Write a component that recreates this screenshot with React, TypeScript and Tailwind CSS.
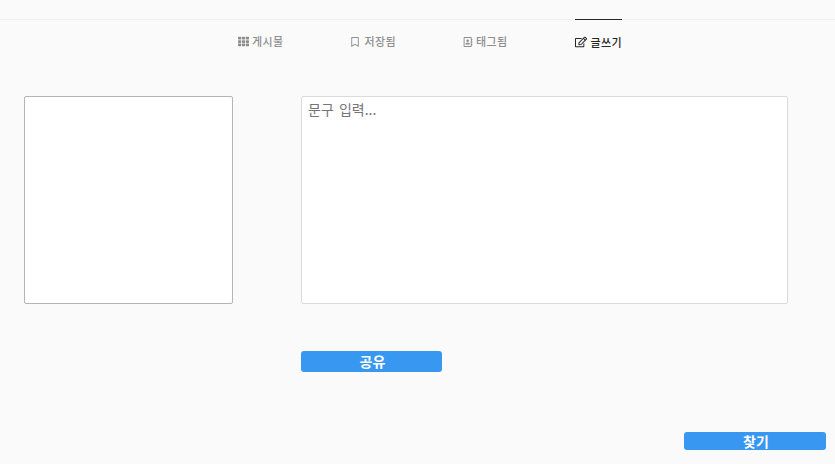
import React from 'react';
import { FaTh, FaRegBookmark, FaRegEdit, FaRegAddressBook } from 'react-icons/fa';

const font = "font-['Noto_Sans_CJK_KR','Noto_Sans',sans-serif]";

const App: React.FC = () => {
  return (
    <div className={`h-[464px] w-[835px] overflow-hidden bg-[#fafafa] ${font}`}>
      {/* Tabs */}
      <div className="h-5 border-b border-[#efefef]" />
      <nav className="flex justify-center gap-[67px] pl-[25px] -mt-px">
        <a className="flex h-[45px] items-center gap-[4px] text-[11px] font-medium tracking-[0.4px] text-[#8e8e8e]">
          <FaTh size={11} />
          <span className="-ml-px">게시물</span>
        </a>
        <a className="flex h-[45px] items-center gap-[4px] text-[11px] font-medium tracking-[0.4px] text-[#8e8e8e]">
          <FaRegBookmark size={10} />
          <span>저장됨</span>
        </a>
        <a className="flex h-[45px] items-center gap-[4px] text-[11px] font-medium tracking-[0.4px] text-[#8e8e8e]">
          <FaRegAddressBook size={10} />
          <span className="-ml-px">태그됨</span>
        </a>
        <a className="flex h-[45px] items-center gap-[4px] border-t border-[#262626] text-[11px] font-medium tracking-[0.4px] text-[#262626]">
          <FaRegEdit size={12} />
          <span>글쓰기</span>
        </a>
      </nav>

      {/* Form */}
      <div className="mt-[32px] flex items-start pl-6">
        <div className="h-[208px] w-[209px] rounded-[2px] border border-[#b5b5b5] bg-white" />
        <div className="ml-[68px] w-[487px]">
          <textarea
            placeholder="문구 입력..."
            className="block h-[208px] w-full resize-none rounded-[2px] border border-[#dbdbdb] bg-white px-[6px] py-[2px] text-sm [word-spacing:2px] text-[#757575] outline-none placeholder:text-[#757575]"
          />
          <button className="mt-[47px] block h-[21px] w-[141px] rounded-[3px] bg-[#3897f0] pl-[2px] text-sm leading-[21px] font-bold text-white">
            공유
          </button>
        </div>
      </div>

      <div className="mt-[60px] flex justify-end pr-[9px]">
        <button className="h-[18px] w-[142px] rounded-[3px] bg-[#3897f0] pl-[2px] text-sm leading-[18px] font-bold text-white">
          찾기
        </button>
      </div>
    </div>
  );
};

export default App;
